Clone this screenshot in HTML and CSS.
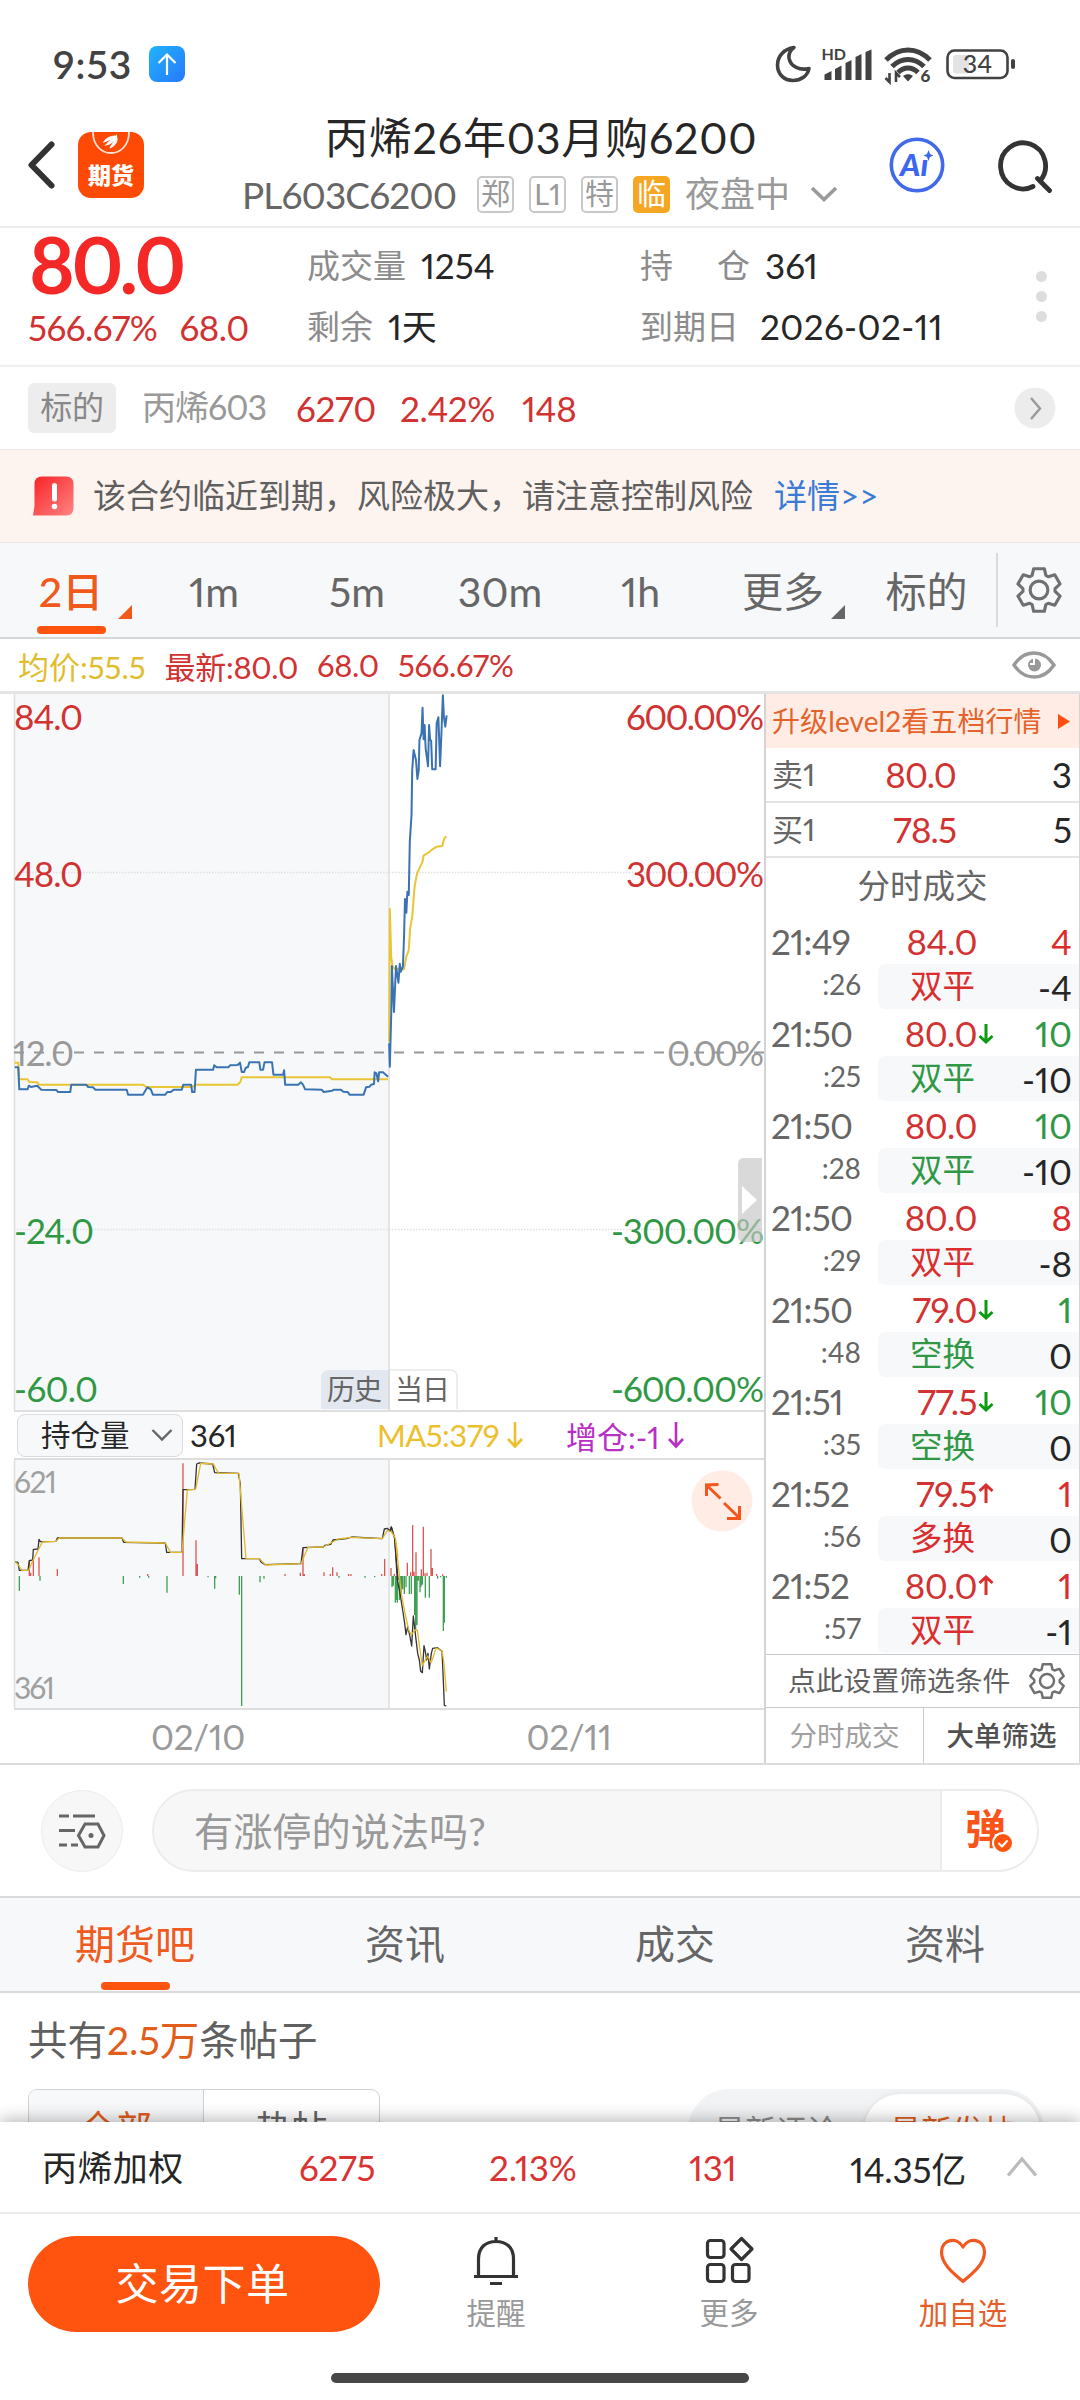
FILE: index.html
```html
<!DOCTYPE html>
<html lang="zh-CN">
<head>
    <meta charset="UTF-8">
    <meta name="viewport" content="width=device-width, initial-scale=1.0">
    <title>丙烯26年03月购6200</title>
    <link rel="stylesheet" href="styles.css">
</head>
<body>
    <svg width="0" height="0" class="defs">
        <symbol id="gear" viewBox="-23 -23 46 46">
            <path d="M-6.6-14L-5.1-20.4H5.1L6.6-14L8.9-12.7L15.1-14.6L20.2-5.8L15.4-1.4V1.4L20.2 5.8L15.1 14.6L8.9 12.7L6.6 14L5.1 20.4H-5.1L-6.6 14L-8.9 12.7L-15.1 14.6L-20.2 5.8L-15.4 1.4V-1.4L-20.2-5.8L-15.1-14.6L-8.9-12.7Z" stroke-linejoin="round"/>
            <circle r="8.5"/>
        </symbol>
    </svg>

    <div class="status-bar">
        <span class="time">9:53</span>
        <svg class="upload" width="36" height="36" viewBox="0 0 36 36">
            <defs><linearGradient id="up" x1="0" y1="0" x2="1" y2="1"><stop offset="0" stop-color="#1fb4fb"/><stop offset="1" stop-color="#2878fb"/></linearGradient></defs>
            <rect width="36" height="36" rx="8" fill="url(#up)"/>
            <path d="M18 29V8.500M9.500 17L18 8.500L26.500 17" fill="none" stroke="#fff" stroke-width="2.200"/>
        </svg>
        <svg class="status-icons" width="246" height="46" viewBox="774 44 246 46">
            <path d="M794 47.500C784 49 777.500 56 777.500 65C777.500 74 784 80.500 793 80.500C801 80.500 807.500 76 809 68.500C800 70.500 790.500 67 789 58C788.500 54 790.500 50 794 47.500Z" fill="none" stroke="#424242" stroke-width="3.600" stroke-linejoin="round"/>
            <text x="821.500" y="60" class="hd">HD</text>
            <path d="M824.500 80V74.500L831.500 71V80ZM835 80V69L841.500 65.500V80ZM845.500 80V63L851.500 60V80ZM855.500 80V57L861.500 54V80ZM865.500 80V52L871.500 49.500V80Z" fill="#424242"/>
            <g fill="none" stroke="#424242" stroke-width="5">
                <path d="M886 60C899 46.500 917 46.500 930 60"/>
                <path d="M892 66.500C901.500 57 914.500 57 924 66.500"/>
                <path d="M898 72.500C904 66.500 912 66.500 918 72.500"/>
                <path d="M889.500 73V82L885.500 78M896 82V73L900 77" stroke-width="2.600"/>
            </g>
            <path d="M903 76C906 73.500 910 73.500 913 76L908 81.500Z" fill="#424242"/>
            <text x="920.500" y="82" class="six">6</text>
            <rect x="947.500" y="50.500" width="60" height="27.500" rx="7" fill="#fff" stroke="#424242" stroke-width="2.600"/>
            <rect x="953" y="55" width="16" height="18.500" rx="3" fill="#e3e3e3"/>
            <rect x="1011" y="59" width="4" height="10" rx="2" fill="#424242"/>
            <text x="977.500" y="73" class="battery">34</text>
        </svg>
    </div>

    <header class="header">
        <svg class="back" width="30" height="52" viewBox="0 0 30 52"><path d="M24.500 5.500L4.500 26L24.500 46.500" fill="none" stroke="#333" stroke-width="6" stroke-linecap="round" stroke-linejoin="round"/></svg>
        <svg class="app-icon" width="66" height="66" viewBox="0 0 66 66">
            <rect width="66" height="66" rx="13" fill="#ff4a05"/>
            <path d="M15 0C15 28 51 28 51 0" fill="none" stroke="#ffe2d5" stroke-width="1.800"/>
            <path d="M26 10C28 6 33 4 37 4C34 6 30 9 26 10ZM28 13C31 10 34 6 38 4C36 9 33 12 28 13ZM32 16C35 12 37 8 38.500 4C40 9 38 13 32 16Z" fill="#fff" stroke="#fff" stroke-width="1.200"/>
            <text x="33" y="52" class="app-name">期货</text>
        </svg>
        <div class="title-box">
            <h1>丙烯26年03月购6200</h1>
            <div class="code-row">
                <span class="code">PL603C6200</span>
                <span class="tag">郑</span>
                <span class="tag">L1</span>
                <span class="tag">特</span>
                <span class="tag tag-warn">临</span>
                <span class="session">夜盘中</span>
                <svg width="28" height="18" viewBox="0 0 28 18"><path d="M2 3L14 14.500L26 3" fill="none" stroke="#9a9a9a" stroke-width="3.600"/></svg>
            </div>
        </div>
        <svg class="ai" width="56" height="56" viewBox="0 0 56 56">
            <circle cx="28" cy="28" r="25.700" fill="none" stroke="#4169ea" stroke-width="3.600"/>
            <text x="11" y="38.500" class="ai-text">Aı</text>
            <path d="M39.500 13L41 17L44.500 18.500L41 20L39.500 24L38 20L34.500 18.500L38 17Z" fill="#3a66f0"/>
        </svg>
        <svg class="search" width="54" height="54" viewBox="0 0 54 54"><path d="M34 47.500A22.500 23 0 1 1 41 42M38.500 39.500L50.500 51.500" fill="none" stroke="#333" stroke-width="4.800" stroke-linecap="round"/></svg>
    </header>

    <section class="quote">
        <div class="quote-price">
            <div class="price">80.0</div>
            <div class="change"><span>566.67%</span><span>68.0</span></div>
        </div>
        <div class="quote-col">
            <div><label>成交量</label><b>1254</b></div>
            <div><label>剩余</label><b>1天</b></div>
        </div>
        <div class="quote-col">
            <div><label class="spread"><i>持</i><i>仓</i></label><b>361</b></div>
            <div><label>到期日</label><b class="date">2026-02-11</b></div>
        </div>
        <div class="dots"><i></i><i></i><i></i></div>
    </section>

    <section class="underlying">
        <span class="badge">标的</span>
        <span class="name">丙烯603</span>
        <span class="v1">6270</span>
        <span class="v2">2.42%</span>
        <span class="v3">148</span>
        <svg class="go" width="42" height="42" viewBox="0 0 42 42"><circle cx="21" cy="21" r="20.500" fill="#ececec"/><path d="M17 11L26 21.500L17 32" fill="none" stroke="#999" stroke-width="2.400"/></svg>
    </section>

    <section class="notice">
        <svg width="42" height="40" viewBox="0 0 42 40">
            <defs><linearGradient id="al" x1="0" y1="0" x2="1" y2="1"><stop offset="0" stop-color="#f82126"/><stop offset="1" stop-color="#ff8583"/></linearGradient></defs>
            <path d="M0 39.500L1.500 30V8Q1.500 .5 9 .5H33Q40.500 .5 40.500 8V32Q40.500 39.500 33 39.500Z" fill="url(#al)"/>
            <path d="M21.500 9.500V23" stroke="#fff" stroke-width="5" stroke-linecap="round"/><circle cx="21.500" cy="30.500" r="2.800" fill="#fff"/>
        </svg>
        <span class="text">该合约临近到期，风险极大，请注意控制风险</span>
        <a>详情&gt;&gt;</a>
    </section>

    <nav class="periods">
        <span class="active">2日</span>
        <span>1m</span>
        <span>5m</span>
        <span>30m</span>
        <span>1h</span>
        <span class="more">更多</span>
        <span>标的</span>
        <div class="setting"><svg width="48" height="48" class="gear"><use href="#gear"/></svg></div>
    </nav>

    <div class="avg-row">
        <span class="avg">均价:55.5</span>
        <span>最新:80.0</span>
        <span>68.0</span>
        <span>566.67%</span>
        <svg width="44" height="28" viewBox="0 0 44 28"><path d="M2 14Q10 2 22 2T42 14Q34 26 22 26T2 14Z" fill="none" stroke="#999" stroke-width="3.400"/><circle cx="22.500" cy="14" r="6.500" fill="#999"/><path d="M18 13H22V7" fill="none" stroke="#fff" stroke-width="2"/></svg>
    </div>

    <main class="board">
        <div class="charts">
            <svg class="price-chart" width="764" height="716" viewBox="0 694 764 716">
                <rect x="14" y="694" width="375" height="716" fill="#f6f8fa"/>
                <path d="M14.500 694V1410M389 694V1410" stroke="#dedede" stroke-width="1.500"/>
                <path d="M14 872.500H764M14 1229.500H764" stroke="#dfdfdf" stroke-width="1.500" stroke-dasharray="1.500 1.500"/>
                <path d="M14 1052.500H764" stroke="#979797" stroke-width="2.200" stroke-dasharray="10 10"/>
                <g class="labels">
                    <text x="14" y="730" textLength="69" class="up">84.0</text>
                    <text x="14" y="886.500" textLength="69" class="up">48.0</text>
                    <text x="13" y="1065.500" textLength="61" class="flat">12.0</text>
                    <text x="14" y="1244" textLength="80" class="down">-24.0</text>
                    <text x="14" y="1401.500" textLength="84" class="down">-60.0</text>
                    <text x="626" y="730" textLength="138" class="up">600.00%</text>
                    <text x="626" y="886.500" textLength="138" class="up">300.00%</text>
                    <text x="667" y="1065.500" textLength="97" class="flat">0.00%</text>
                    <text x="611" y="1244" textLength="153" class="down">-300.00%</text>
                    <text x="611" y="1401.500" textLength="153" class="down">-600.00%</text>
                </g>
                <g transform="translate(0 690) scale(.34437 .33333)" class="lines">
                    <polyline stroke="#e9c534" points="43,1118 53,1118 56,1168 80,1168 85,1176 108,1177 113,1184 416,1184 424,1191 558,1191 568,1184 690,1184 698,1176 702,1162 958,1162 964,1168 1127,1168"/>
                    <polyline stroke="#e9c534" points="1130,1055 1132,657 1136,800 1140,830 1150,840 1160,835 1173,838 1180,800 1187,780 1191,715 1197,680 1204,590 1211,550 1218,535 1227,515 1230,497 1245,487 1256,478 1268,470 1284,468 1290,446 1296,439"/>
                    <polyline stroke="#3b73b2" points="43,1132 53,1132 56,1198 80,1198 84,1187 90,1191 108,1187 120,1199 164,1200 168,1206 204,1206 207,1184 250,1184 256,1191 270,1192 277,1199 368,1199 372,1214 415,1214 428,1192 438,1198 444,1214 480,1214 486,1206 496,1206 504,1199 528,1199 532,1184 555,1184 558,1206 565,1206 569,1139 619,1139 622,1126 629,1132 663,1132 668,1126 690,1125 697,1118 702,1146 709,1146 713,1134 720,1131 724,1117 753,1117 756,1139 764,1139 768,1117 790,1117 794,1154 822,1154 825,1141 828,1184 866,1184 874,1177 880,1184 886,1198 934,1199 940,1206 965,1202 970,1199 990,1199 997,1205 1010,1206 1015,1214 1056,1214 1063,1192 1073,1190 1078,1184 1086,1182 1088,1147 1093,1150 1098,1174 1101,1147 1112,1147 1127,1160"/>
                    <polyline stroke="#3b73b2" points="1130,1060 1132,1130 1136,975 1138,828 1144,966 1150,828 1157,878 1161,821 1164,845 1170,830 1173,750 1176,627 1180,668 1183,605 1187,615 1190,455 1195,375 1197,240 1201,180 1208,210 1212,267 1216,240 1218,150 1224,130 1227,53 1230,148 1233,105 1236,175 1243,229 1246,105 1249,150 1252,152 1255,238 1265,238 1268,100 1273,82 1278,229 1283,100 1286,16 1289,80 1293,110 1297,76"/>
                </g>
                <path d="M330 1370H389V1409H321V1378Q321 1370 330 1370Z" fill="#e3e7f0"/>
                <path d="M389 1370H450Q457 1370 457 1377V1409" fill="#fff" stroke="#e8e8e8" stroke-width="1.500"/>
                <path d="M389 1370V1410" stroke="#d8d8d8" stroke-width="1.500"/>
                <text x="327" y="1400" textLength="55" class="day">历史</text>
                <text x="395" y="1400" textLength="55" class="day">当日</text>
                <path d="M762 1158V1242H744Q738 1242 738 1236V1164Q738 1158 744 1158Z" fill="#c4c4c4" fill-opacity=".65"/>
                <path d="M742 1186L757 1200L742 1214Z" fill="#fff"/>
            </svg>
            <div class="indicator">
                <div class="select">持仓量<svg width="22" height="14" viewBox="0 0 22 14"><path d="M1.500 2L11 11.500L20.500 2" fill="none" stroke="#666" stroke-width="2.400"/></svg></div>
                <span class="hold">361</span>
                <span class="ma">MA5:379<svg width="16" height="28" viewBox="0 0 16 28"><path d="M8 1V25.500M1 18L8 25.500L15 18"/></svg></span>
                <span class="inc">增仓:-1<svg width="16" height="28" viewBox="0 0 16 28"><path d="M8 1V25.500M1 18L8 25.500L15 18"/></svg></span>
            </div>
            <svg class="hold-chart" width="764" height="248" viewBox="0 1460 764 248">
                <rect x="14" y="1460" width="375" height="248" fill="#f6f8fa"/>
                <path d="M14.500 1460V1708M389 1460V1708" stroke="#dedede" stroke-width="1.500"/>
                <text x="14" y="1492.500" textLength="43" class="scale">621</text>
                <text x="14" y="1698.500" textLength="41" class="scale">361</text>
                <g transform="translate(0 1340) scale(.33333)" class="bars">
                    <path class="red" d="M88 708V662M92 708V698M100 708V655M117 708V652M172 708V687M443 708V702M549 708V370M588 708V601M592 708V672M855 708V702M901 708V698M909 708V625M913 708V702M972 708V697M991 708V702M998 708V682M1011 708V697M1046 708V702M1053 708V702M1145 708V702M1154 708V657"/>
                    <path class="green" d="M58 708V753M120 708V722M370 708V732M419 708V713M446 708V713M501 708V758M624 708V712M644 708V746M647 708V715M718 708V764M725 708V1098M780 708V727M792 708V716M1017 708V713M1095 708V713M1124 708V712"/>
                </g>
                <g transform="translate(370 1340) scale(.33333)" class="bars">
                    <path class="red" d="M63 708V684M73 708V702M112 708V668M122 708V697M128 708V555M132 708V695M138 708V637M154 708V688M160 708V560M165 708V700M171 708V698M183 708V627M187 708V684M200 708V702M218 708V703"/>
                    <path class="green" d="M66 708V741M70 708V737M76 708V788M79 708V780M82 708V788M88 708V780M91 708V765M94 708V758M98 708V748M103 708V762M108 708V742M118 708V762M124 708V762M134 708V825M137 708V870M141 708V855M145 708V722M150 708V757M153 708V740M157 708V734M166 708V773M178 708V773M203 708V716M212 708V712M220 708V873M223 708V848M229 708V713"/>
                </g>
                <g transform="translate(0 1340) scale(.33333)" class="lines thin">
                    <polyline stroke="#333" points="45,666 54,667 58,691 84,691 88,662 98,660 100,628 114,627 117,598 121,605 168,604 172,594 366,594 371,607 496,609 500,637 546,637 549,449 585,448 590,372 597,369 638,372 644,398 715,400 721,432 725,656 778,656 783,666 795,674 903,671 909,623 970,621 975,616 992,613 999,600 1040,596 1055,591 1147,596 1153,567 1162,565 1170,573 1174,561 1184,595 1194,720"/>
                    <polyline stroke="#e2b92f" points="45,666 53,672 66,691 86,691 97,665 127,606 168,604 178,594 366,594 378,606 496,609 512,637 546,637 562,450 587,448 602,370 640,372 656,400 717,400 738,656 778,656 797,675 903,671 924,622 970,621 1015,597 1055,592 1147,596 1162,572 1174,573 1186,595 1194,650"/>
                </g>
                <g transform="translate(370 1340) scale(.33333)" class="lines thin">
                    <polyline stroke="#333" points="60,573 64,561 74,595 82,720 90,760 98,810 104,850 108,884 113,860 119,885 125,918 130,828 137,890 143,940 148,960 152,994 157,998 162,917 166,935 170,960 174,940 178,987 184,940 188,925 202,923 216,934 219,1000 223,1096 229,1098"/>
                    <polyline stroke="#e2b92f" points="64,574 76,595 82,650 94,760 104,815 116,870 124,885 134,870 142,870 150,930 157,977 166,960 173,948 183,968 190,950 198,924 216,932 222,970 229,1055"/>
                </g>
                <circle cx="722" cy="1501" r="30.500" fill="#ffece5"/>
                <path d="M720.500 1498.500L706 1484.500M706.500 1496V1485L718.500 1484.500M724 1503L739.500 1518M739.500 1506V1518.500H727" fill="none" stroke="#f2561d" stroke-width="3"/>
            </svg>
            <div class="dates"><span>02/10</span><span>02/11</span></div>
        </div>

        <aside class="orders">
            <div class="upgrade"><span>升级level2看五档行情</span><svg width="12" height="15" viewBox="0 0 12 15"><path d="M0 0L12 7.500L0 15Z" fill="#ff4f10"/></svg></div>
            <div class="bid"><span>卖1</span><em>80.0</em><b>3</b></div>
            <div class="bid"><span>买1</span><em>78.5</em><b>5</b></div>
            <div class="trade-title">分时成交</div>
            <div class="trade">
                <div class="line"><span>21:49</span><em>84.0</em><b class="up">4</b></div>
                <div class="sub"><small>:26</small><p><i class="up">双平</i><b>-4</b></p></div>
            </div>
            <div class="trade">
                <div class="line"><span>21:50</span><em>80.0</em><svg class="arrow down"><path d="M8 1V19M1.500 13L8 19L14.500 13"/></svg><b class="down">10</b></div>
                <div class="sub"><small>:25</small><p><i class="down">双平</i><b>-10</b></p></div>
            </div>
            <div class="trade">
                <div class="line"><span>21:50</span><em>80.0</em><b class="down">10</b></div>
                <div class="sub"><small>:28</small><p><i class="down">双平</i><b>-10</b></p></div>
            </div>
            <div class="trade">
                <div class="line"><span>21:50</span><em>80.0</em><b class="up">8</b></div>
                <div class="sub"><small>:29</small><p><i class="up">双平</i><b>-8</b></p></div>
            </div>
            <div class="trade">
                <div class="line"><span>21:50</span><em>79.0</em><svg class="arrow down"><path d="M8 1V19M1.500 13L8 19L14.500 13"/></svg><b class="down">1</b></div>
                <div class="sub"><small>:48</small><p><i class="down">空换</i><b>0</b></p></div>
            </div>
            <div class="trade">
                <div class="line"><span>21:51</span><em>77.5</em><svg class="arrow down"><path d="M8 1V19M1.500 13L8 19L14.500 13"/></svg><b class="down">10</b></div>
                <div class="sub"><small>:35</small><p><i class="down">空换</i><b>0</b></p></div>
            </div>
            <div class="trade">
                <div class="line"><span>21:52</span><em>79.5</em><svg class="arrow up"><path d="M8 20V2M1.500 8L8 2L14.500 8"/></svg><b class="up">1</b></div>
                <div class="sub"><small>:56</small><p><i class="up">多换</i><b>0</b></p></div>
            </div>
            <div class="trade">
                <div class="line"><span>21:52</span><em>80.0</em><svg class="arrow up"><path d="M8 20V2M1.500 8L8 2L14.500 8"/></svg><b class="up">1</b></div>
                <div class="sub"><small>:57</small><p><i class="up">双平</i><b>-1</b></p></div>
            </div>
            <div class="filter"><span>点此设置筛选条件</span><svg width="38" height="40" class="gear"><use href="#gear"/></svg></div>
            <div class="order-tabs"><span>分时成交</span><span class="on">大单筛选</span></div>
        </aside>
    </main>

    <section class="comment">
        <div class="round">
            <svg width="48" height="38" viewBox="0 0 48 38" fill="none" stroke="#666" stroke-width="3"><path d="M1 4H11M15 4H37M1 18.500H17M1 33H9M13 33H20M26 12L32 12H40L46 23.500L40 35H27L20.500 23.500L27 12"/><circle cx="33" cy="23.500" r="2.500" fill="#666" stroke="none"/></svg>
        </div>
        <div class="input">
            <span class="placeholder">有涨停的说法吗?</span>
            <div class="danmu">
                <svg width="50" height="60" viewBox="0 -6 50 60"><text x="0" y="37" class="dan">弹</text><circle cx="38" cy="36" r="10" fill="#ff5310" stroke="#fff" stroke-width="2"/><path d="M33.500 36L37 39.500L42.500 33.500" fill="none" stroke="#fff" stroke-width="2.200"/></svg>
            </div>
        </div>
    </section>

    <nav class="tabs">
        <span class="active">期货吧</span>
        <span>资讯</span>
        <span>成交</span>
        <span>资料</span>
    </nav>

    <section class="posts">
        <p class="count">共有<em>2.5万</em>条帖子</p>
        <div class="post-filter">
            <div class="seg"><span class="on">全部</span><span>热帖</span></div>
            <div class="sort"><span>最新评论</span><span class="on">最新发帖</span></div>
        </div>
    </section>

    <footer class="footer">
        <div class="index-row">
            <span class="idx-name">丙烯加权</span>
            <span class="c1">6275</span>
            <span class="c2">2.13%</span>
            <span class="c3">131</span>
            <span class="c4">14.35亿</span>
            <svg width="32" height="22" viewBox="0 0 32 22"><path d="M2 19.500L16 3L30 19.500" fill="none" stroke="#bbb" stroke-width="3.200"/></svg>
        </div>
        <div class="actions">
            <button>交易下单</button>
            <div class="action">
                <svg width="48" height="50" viewBox="0 0 48 50" fill="none" stroke="#333" stroke-width="3.200"><path d="M24 1V5M6.500 40V23C6.500 11 14 5.500 24 5.500S41.500 11 41.500 23V40M2 40.500H46M18 47.500H30"/></svg>
                <span>提醒</span>
            </div>
            <div class="action">
                <svg width="48" height="50" viewBox="0 0 48 50" fill="none" stroke="#333" stroke-width="3.200" stroke-linejoin="round"><rect x="2.500" y="4.500" width="16.500" height="17" rx="3"/><rect x="2.500" y="28.500" width="16.500" height="17" rx="3"/><rect x="27.500" y="28.500" width="16.500" height="17" rx="3"/><path d="M36.500 2.500L47 13L36.500 23.500L26 13Z"/></svg>
                <span>更多</span>
            </div>
            <div class="action fav">
                <svg width="48" height="50" viewBox="0 0 48 50" fill="none" stroke="#f2581f" stroke-width="3.200" stroke-linejoin="round"><path d="M24 45.500C14 37 2.500 28 2.500 16C2.500 3 18 .5 24 11C30 .5 45.500 3 45.500 16C45.500 28 34 37 24 45.500Z"/></svg>
                <span>加自选</span>
            </div>
        </div>
        <div class="home-bar"></div>
    </footer>
</body>
</html>
```
FILE: styles.css
```css
:root {
    --orange: #ff5310;
    --red: #d13232;
    --green: #309845;
    --text: #262626;
    --gray: #666;
    --light: #999;
    --line: #e4e4e4;
    --panel: #f6f8fa;
}
* {
    box-sizing: border-box;
}
body {
    margin: 0;
    width: 1080px;
    height: 2400px;
    overflow: hidden;
    display: flex;
    flex-direction: column;
    background: #fff;
    color: var(--text);
    font-family: Lato, "Noto Sans CJK SC", sans-serif;
    font-variant-numeric: proportional-nums;
    font-size: 35px;
    white-space: nowrap;
}
body > * {
    flex: none;
}
svg {
    flex: none;
    display: block;
    overflow: visible;
}
.defs {
    position: absolute;
}
em, i {
    font-style: normal;
}
b {
    font-weight: 400;
}
.up {
    color: #db2d2d;
}
.down {
    color: var(--green);
}
.gear {
    fill: none;
    stroke: #707070;
    stroke-width: 3;
}

/* status bar */
.status-bar {
    height: 105px;
    padding: 23px 60px 0 53px;
    display: flex;
    align-items: flex-start;
}
.time {
    width: 96px;
    font-size: 39px;
    line-height: 82px;
    font-weight: 600;
    letter-spacing: 1px;
    color: #424242;
}
.upload {
    margin-top: 23px;
}
.status-icons {
    margin: 21px 0 0 auto;
}
.hd {
    font-size: 16px;
    font-weight: 700;
    fill: #424242;
}
.six {
    font-size: 17px;
    font-weight: 900;
    fill: #424242;
}
.battery {
    font-size: 25px;
    font-weight: 500;
    text-anchor: middle;
    fill: #424242;
}

/* header */
.header {
    height: 123px;
    padding-left: 27px;
    display: flex;
    border-bottom: 2px solid #ececec;
}
.back {
    margin-top: 34px;
}
.app-icon {
    margin: 27px 98px 0 21px;
}
.app-name {
    font-size: 23px;
    font-weight: 900;
    text-anchor: middle;
    fill: #fff;
}
.title-box {
    width: 647px;
}
h1 {
    margin: 0;
    padding-left: 83px;
    font-size: 43px;
    font-weight: 400;
    line-height: 66px;
    letter-spacing: .8px;
}
.code-row {
    display: flex;
    align-items: center;
    height: 46px;
}
.code {
    width: 235px;
    font-size: 37px;
    letter-spacing: -.9px;
    color: var(--gray);
}
.tag {
    width: 37px;
    height: 37px;
    margin-right: 15px;
    border: 2px solid #c8c8c8;
    border-radius: 5px;
    font-size: 29px;
    line-height: 31px;
    text-align: center;
    color: var(--light);
}
.tag-warn {
    background: #f5a623;
    border-color: #f5a623;
    color: #fff;
}
.session {
    width: 125px;
    font-size: 35px;
    line-height: 42px;
    padding-bottom: 2px;
    color: var(--light);
}
.ai {
    margin-top: 32px;
}
.ai-text {
    font-size: 31px;
    font-weight: 900;
    font-style: italic;
    fill: #3a66f0;
}
.search {
    margin: 34px 0 0 54px;
}

/* quote */
.quote {
    height: 139px;
    display: grid;
    grid-template-columns: 307px 333px 1fr 84px;
    border-bottom: 2px solid #f0f0f0;
}
.price {
    padding-left: 29px;
    height: 72px;
    line-height: 72px;
    font-size: 78px;
    font-weight: 700;
    letter-spacing: -3.5px;
    color: #f52828;
}
.change {
    display: flex;
    gap: 22px;
    padding-left: 28px;
    height: 56px;
    line-height: 54px;
    letter-spacing: -.5px;
    color: var(--red);
}
.quote-col > div {
    display: flex;
    height: 61px;
    line-height: 61px;
}
.quote-col > div:first-child {
    height: 68px;
    padding-top: 7px;
}
.quote-col label {
    color: #8c8c8c;
    font-size: 33px;
    margin-right: 15px;
}
.spread {
    width: 110px;
    display: flex;
    justify-content: space-between;
}
.date {
    margin-left: 6px;
    letter-spacing: .4px;
}
.dots {
    padding: 43px 0 0 40px;
    display: flex;
    flex-direction: column;
    gap: 9px;
}
.dots i {
    width: 11px;
    height: 11px;
    border-radius: 50%;
    background: #ddd;
}

/* underlying */
.underlying {
    height: 82px;
    padding: 0 24px 0 28px;
    display: flex;
    align-items: center;
    letter-spacing: -.3px;
    color: var(--red);
}
.badge {
    width: 88px;
    height: 50px;
    line-height: 48px;
    margin-right: 26px;
    border-radius: 6px;
    background: #ededed;
    color: #888;
    font-size: 32px;
    text-align: center;
}
.name {
    width: 154px;
    font-size: 34px;
    line-height: 46px;
    padding-bottom: 2px;
    letter-spacing: -1px;
    color: var(--light);
}
.v1 {
    width: 104px;
}
.v2 {
    width: 122px;
}
.go {
    margin-left: auto;
}

/* expiry notice */
.notice {
    height: 94px;
    padding-left: 33px;
    display: flex;
    align-items: center;
    background: #fdf3ef;
    border: 1px solid #ebe7e5;
    border-width: 1px 0;
    font-size: 33px;
    line-height: 88px;
    color: #5f5f5f;
}
.notice .text {
    width: 681px;
    margin-left: 18px;
    padding-bottom: 3px;
}
.notice a {
    padding-bottom: 3px;
    color: #3b7bd6;
}

/* period tabs */
.periods {
    height: 96px;
    display: grid;
    grid-template-columns: 142px 144px 142px 144px 137px 148px 139px 84px;
    align-items: center;
    background: var(--panel);
    border-bottom: 2px solid #d6d6d6;
    font-size: 41px;
    text-align: center;
    color: var(--gray);
}
.periods span {
    position: relative;
    line-height: 94px;
    padding-top: 2px;
    height: 94px;
}
.periods .active {
    color: #f0581c;
    font-weight: 500;
}
.active::before {
    content: "";
    position: absolute;
    left: 37px;
    bottom: 3px;
    width: 69px;
    height: 8px;
    border-radius: 4px;
    background: var(--orange);
}
.periods .active::after, .more::after {
    content: "";
    position: absolute;
    right: 10px;
    bottom: 18px;
    border: 7px solid;
    border-color: transparent currentColor currentColor transparent;
}
.more::after {
    right: 12px;
}
.setting {
    height: 74px;
    border-left: 2px solid #d9dadb;
    display: flex;
    align-items: center;
    justify-content: center;
}

/* average price row */
.avg-row {
    height: 55px;
    padding: 0 24px 0 18px;
    display: flex;
    align-items: center;
    gap: 19px;
    border-bottom: 3px solid var(--line);
    font-size: 31px;
    letter-spacing: -.3px;
    color: var(--red);
}
.avg-row .avg {
    letter-spacing: 0;
    color: #e0bd2c;
}
.avg-row svg {
    margin-left: auto;
}

/* charts and order book */
.board {
    height: 1071px;
    display: flex;
    border-bottom: 2px solid #dcdcdc;
}
.charts {
    width: 764px;
}
.labels {
    font-size: 35px;
}
.labels .up {
    fill: var(--red);
}
.labels .down {
    fill: var(--green);
}
.labels .flat {
    fill: var(--light);
}
.lines polyline {
    fill: none;
    stroke-width: 2;
    stroke-linejoin: round;
    vector-effect: non-scaling-stroke;
}
.thin polyline {
    stroke-width: 1.3;
}
.bars path {
    fill: none;
    stroke-width: 1.3;
    vector-effect: non-scaling-stroke;
}
.bars .red {
    stroke: #d95555;
}
.bars .green {
    stroke: #3ea052;
}
.day {
    font-size: 28px;
    fill: var(--gray);
}
.scale {
    font-size: 30px;
    fill: #a0a0a0;
}
.indicator {
    height: 50px;
    margin-left: 14px;
    padding-left: 3px;
    display: flex;
    align-items: center;
    border: 2px solid #dedede;
    border-width: 2px 0;
    font-size: 31px;
}
.indicator svg {
    fill: none;
}
.select {
    width: 166px;
    height: 43px;
    margin-right: 7px;
    padding: 0 9px 0 23px;
    display: flex;
    align-items: center;
    justify-content: space-between;
    border: 1px solid #d8dade;
    border-radius: 8px;
    background: var(--panel);
    font-size: 29.5px;
    line-height: 38px;
}
.hold {
    width: 187px;
}
.ma, .inc {
    display: flex;
    align-items: center;
    gap: 8px;
    stroke-width: 2.6;
}
.ma {
    width: 189px;
    letter-spacing: -.5px;
    color: #ecc02c;
}
.inc {
    color: #b92fc4;
}
.ma svg, .inc svg {
    stroke: currentColor;
}
.dates {
    height: 55px;
    margin-left: 14px;
    display: flex;
    border-top: 2px solid #dedede;
    line-height: 53px;
    letter-spacing: -.3px;
    color: #9a9a9a;
    text-align: center;
}
.dates span {
    width: 368px;
}
.dates span + span {
    width: 374px;
}
.orders {
    width: 316px;
    height: 1069px;
    border: 2px solid #d4d4d4;
    border-width: 0 1px 0 2px;
}
.upgrade {
    height: 54px;
    padding: 0 9px 0 6px;
    display: flex;
    align-items: center;
    justify-content: space-between;
    background: #ffece4;
    font-size: 28px;
    line-height: 50px;
    letter-spacing: .1px;
    color: #e4632b;
}
.bid {
    height: 55px;
    padding: 0 7px 0 6px;
    display: grid;
    grid-template-columns: 60px 124px 1fr;
    align-items: center;
    border-bottom: 2px solid var(--line);
    line-height: 53px;
}
.bid span {
    font-size: 31px;
    color: var(--gray);
}
.bid em {
    text-align: right;
    letter-spacing: -.9px;
    color: var(--red);
}
.bid b {
    text-align: right;
}
.trade-title {
    height: 60px;
    line-height: 55px;
    font-size: 32.500px;
    text-align: center;
    color: var(--gray);
}
.trade {
    height: 92px;
}
.line {
    display: flex;
    align-items: center;
    height: 46px;
    padding: 0 7px 0 5px;
}
.line span {
    width: 80px;
    letter-spacing: -.6px;
    color: var(--gray);
}
.line em {
    width: 126px;
    text-align: right;
    letter-spacing: -.5px;
    color: var(--red);
}
.line b {
    margin-left: auto;
}
.arrow {
    width: 16px;
    height: 21px;
    margin-left: 1px;
    fill: none;
    stroke: currentColor;
    stroke-width: 3;
}
.arrow.down {
    color: #0c9a10;
}
.sub {
    display: flex;
    height: 45px;
}
.sub small {
    width: 95px;
    margin-right: 17px;
    font-size: 28px;
    line-height: 41px;
    text-align: right;
    color: var(--gray);
}
.sub p {
    margin: 0;
    flex: 1;
    display: flex;
    justify-content: space-between;
    padding: 0 7px 0 32px;
    border-radius: 7px 0 0 7px;
    background: var(--panel);
    line-height: 46px;
}
.sub i {
    font-size: 32.500px;
    line-height: 43px;
}
.filter {
    height: 54px;
    padding: 0 13px 0 22px;
    display: flex;
    align-items: center;
    justify-content: space-between;
    border: 1px solid #c9c9c9;
    border-width: 1px 0;
    font-size: 27.800px;
    line-height: 50px;
    color: #606060;
}
.order-tabs {
    display: grid;
    grid-template-columns: 157px 1fr;
    line-height: 55px;
    font-size: 27.500px;
    text-align: center;
    color: #a0a0a0;
}
.order-tabs .on {
    border-left: 1px solid #c9c9c9;
    color: #505050;
    font-weight: 500;
}

/* comment box */
.comment {
    height: 131px;
    padding: 0 41px;
    display: flex;
    align-items: center;
    gap: 29px;
}
.round {
    width: 82px;
    height: 82px;
    border: 1px solid #ececec;
    border-radius: 50%;
    background: #f7f7f7;
    display: flex;
    align-items: center;
    justify-content: center;
}
.input {
    flex: 1;
    height: 83px;
    display: flex;
    align-items: center;
    justify-content: space-between;
    padding-left: 40px;
    overflow: hidden;
    border: 2px solid #ececec;
    border-radius: 42px;
    background: #f7f7f7;
}
.placeholder {
    padding-bottom: 3px;
    font-size: 39.200px;
    color: var(--light);
}
.danmu {
    width: 97px;
    height: 79px;
    padding-left: 23px;
    display: flex;
    align-items: center;
    border-left: 2px solid #ececec;
    background: #fff;
}
.dan {
    font-size: 41px;
    font-weight: 700;
    fill: #f9541a;
}

/* content tabs */
.tabs {
    height: 97px;
    display: grid;
    grid-template-columns: repeat(4, 1fr);
    border: 2px solid #d9dadb;
    border-width: 2px 0;
    background: var(--panel);
    font-size: 40px;
    line-height: 93px;
    text-align: center;
    color: var(--gray);
}
.tabs span {
    position: relative;
}
.tabs .active {
    color: #ee5a20;
}
.tabs .active::before {
    left: 101px;
    bottom: 1px;
}

/* posts */
.posts {
    height: 129px;
    padding: 0 36px 0 28px;
    overflow: hidden;
}
.count {
    margin: 0;
    height: 96px;
    font-size: 39.400px;
    line-height: 94px;
    color: #606060;
}
.count em {
    color: #e25d1a;
}
.post-filter {
    display: flex;
    justify-content: space-between;
    text-align: center;
    font-size: 36px;
    color: var(--gray);
}
.seg {
    width: 352px;
    height: 82px;
    line-height: 76px;
    display: grid;
    grid-template-columns: 1fr 1fr;
    overflow: hidden;
    border: 1px solid #cfd2d4;
    border-radius: 9px;
}
.seg .on {
    background: var(--panel);
    border-right: 1px solid #cfd2d4;
    color: #e25d1a;
}
.sort {
    width: 356px;
    height: 82px;
    padding: 5px 4px 5px 0;
    display: grid;
    grid-template-columns: 176px 176px;
    border-radius: 41px;
    background: #f1f3f5;
    font-size: 31px;
    line-height: 72px;
    color: #8c8c8c;
}
.sort .on {
    border-radius: 36px;
    background: #fff;
    box-shadow: 0 0 5px #ddd;
    color: #e25d1a;
}

/* bottom bar */
.footer {
    position: relative;
    height: 278px;
    background: #fff;
    box-shadow: 0 -2px 16px rgba(0, 0, 0, 0.3);
}
.index-row {
    height: 92px;
    padding: 0 42px;
    display: flex;
    align-items: center;
    border-bottom: 2px solid #ebebeb;
    letter-spacing: -.2px;
    color: #d93333;
}
.idx-name {
    width: 257px;
    padding-bottom: 3px;
    letter-spacing: .4px;
    color: var(--text);
}
.c1 {
    width: 190px;
}
.c2 {
    width: 200px;
}
.c3 {
    width: 161px;
}
.c4 {
    color: var(--text);
}
.index-row svg {
    margin-left: auto;
}
.actions {
    height: 141px;
    padding: 22px 0 0 28px;
    display: flex;
}
button {
    width: 352px;
    height: 96px;
    margin-right: 39px;
    padding: 0 3px 6px 0;
    border: 0;
    border-radius: 48px;
    background: var(--orange);
    color: #fff;
    font: inherit;
    font-size: 43px;
    letter-spacing: .5px;
}
.action {
    width: 154px;
    margin-right: 79px;
    display: flex;
    flex-direction: column;
    align-items: center;
    font-size: 29.500px;
    line-height: 53px;
    color: var(--light);
}
.action:last-child {
    margin-right: 0;
}
.fav {
    padding-left: 2px;
    color: #e55e27;
}
.home-bar {
    width: 418px;
    height: 10px;
    margin: 18px auto 0;
    border-radius: 5px;
    background: #474747;
}
```
